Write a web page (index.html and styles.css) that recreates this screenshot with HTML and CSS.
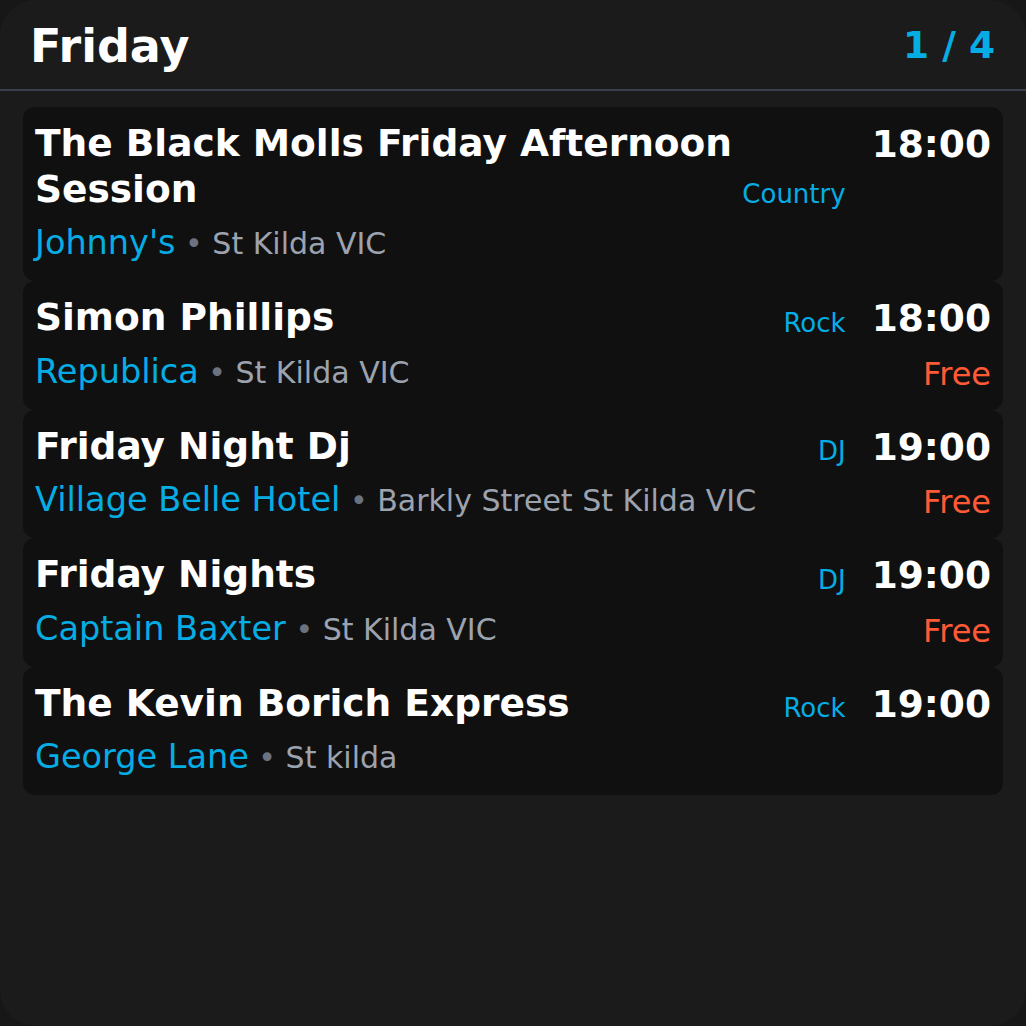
FILE: index.html
```html
<!DOCTYPE html>
<html lang="en">
<head>
<meta charset="utf-8">
<title>Friday</title>
<link rel="stylesheet" href="styles.css">
</head>
<body>
<div class="frame">
  <header class="header">
    <h1 class="day">Friday</h1>
    <div class="pager">1 / 4</div>
  </header>
  <main class="list">
    <article class="card">
      <div class="top">
        <div class="title">The Black Molls Friday Afternoon Session</div>
        <div class="tag">Country</div>
        <div class="time">18:00</div>
      </div>
      <div class="bottom">
        <div class="where"><span class="venue">Johnny's</span><span class="loc"> <span class="dot">•</span> St Kilda VIC</span></div>
      </div>
    </article>
    <article class="card">
      <div class="top">
        <div class="title">Simon Phillips</div>
        <div class="tag">Rock</div>
        <div class="time">18:00</div>
      </div>
      <div class="bottom">
        <div class="where"><span class="venue">Republica</span><span class="loc"> <span class="dot">•</span> St Kilda VIC</span></div>
        <div class="price">Free</div>
      </div>
    </article>
    <article class="card">
      <div class="top">
        <div class="title">Friday Night Dj</div>
        <div class="tag">DJ</div>
        <div class="time">19:00</div>
      </div>
      <div class="bottom">
        <div class="where"><span class="venue">Village Belle Hotel</span><span class="loc"> <span class="dot">•</span> Barkly Street St Kilda VIC</span></div>
        <div class="price">Free</div>
      </div>
    </article>
    <article class="card">
      <div class="top">
        <div class="title">Friday Nights</div>
        <div class="tag">DJ</div>
        <div class="time">19:00</div>
      </div>
      <div class="bottom">
        <div class="where"><span class="venue">Captain Baxter</span><span class="loc"> <span class="dot">•</span> St Kilda VIC</span></div>
        <div class="price">Free</div>
      </div>
    </article>
    <article class="card">
      <div class="top">
        <div class="title">The Kevin Borich Express</div>
        <div class="tag">Rock</div>
        <div class="time">19:00</div>
      </div>
      <div class="bottom">
        <div class="where"><span class="venue">George Lane</span><span class="loc"> <span class="dot">•</span> St kilda</span></div>
      </div>
    </article>
  </main>
</div>
</body>
</html>
```
FILE: styles.css
```css
* { box-sizing: border-box; }
html, body {
  margin: 0;
  padding: 0;
  background: #171717;
}
body {
  font-family: "DejaVu Sans", "Liberation Sans", sans-serif;
  color: #ffffff;
}
.frame {
  width: 1026px;
  height: 1026px;
  background: #1b1b1b;
  border-radius: 36px;
  overflow: hidden;
}
.header {
  height: 91px;
  display: flex;
  align-items: center;
  justify-content: space-between;
  padding: 0 31px 0 30px;
  border-bottom: 2px solid #3a404b;
}
.day {
  margin: 3px 0 0 0;
  font-size: 46px;
  font-weight: bold;
  line-height: 50px;
}
.pager {
  font-size: 37.5px;
  font-weight: bold;
  color: #05ade4;
  line-height: 42px;
}
.list {
  display: flex;
  flex-direction: column;
  padding: 16px 23px 0 23px;
}
.card {
  background: #101010;
  border-radius: 12px;
  padding: 14px 12px 16px 12px;
}
.top {
  display: flex;
  align-items: flex-start;
}
.title {
  flex: 1;
  min-width: 0;
  font-size: 37.5px;
  font-weight: bold;
  line-height: 45.5px;
}
.tag {
  align-self: flex-end;
  font-size: 26px;
  line-height: 33.6px;
  color: #05ade4;
  margin-right: 26px;
}
.time {
  font-size: 37.5px;
  font-weight: bold;
  line-height: 41.5px;
  margin-top: 3px;
}
.bottom {
  display: flex;
  align-items: flex-end;
  justify-content: space-between;
  margin-top: 9px;
}
.where {
  font-size: 33.5px;
  line-height: 44px;
  white-space: nowrap;
}
.venue {
  color: #05ade4;
}
.loc {
  font-size: 30px;
  line-height: 36px;
  color: #9ca3af;
}
.dot {
  color: #6b7280;
}
.price {
  font-size: 32px;
  line-height: 39px;
  color: #ff5a36;
}
```
